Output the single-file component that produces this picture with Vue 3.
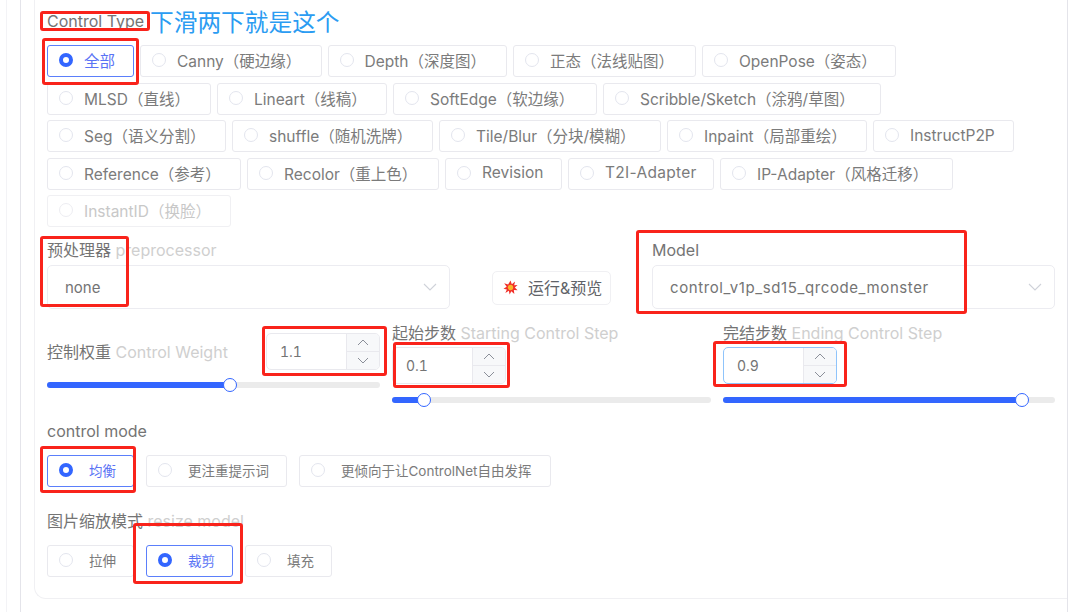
<script setup>
const typeChips = [
  { t: '全部', w: 87, on: true },
  { t: 'Canny（硬边缘）', w: 181.5 },
  { t: 'Depth（深度图）', w: 179.5 },
  { t: '正态（法线贴图）', w: 183 },
  { t: 'OpenPose（姿态）', w: 194 },
  { t: 'MLSD（直线）', w: 164 },
  { t: 'Lineart（线稿）', w: 170 },
  { t: 'SoftEdge（软边缘）', w: 204 },
  { t: 'Scribble/Sketch（涂鸦/草图）', w: 278 },
  { t: 'Seg（语义分割）', w: 179 },
  { t: 'shuffle（随机洗牌）', w: 201 },
  { t: 'Tile/Blur（分块/模糊）', w: 222 },
  { t: 'Inpaint（局部重绘）', w: 200 },
  { t: 'InstructP2P', w: 141 },
  { t: 'Reference（参考）', w: 194 },
  { t: 'Recolor（重上色）', w: 192 },
  { t: 'Revision', w: 117 },
  { t: 'T2I-Adapter', w: 146, wide: true },
  { t: 'IP-Adapter（风格迁移）', w: 233 },
  { t: 'InstantID（换脸）', w: 184, off: true }
]
const modeChips = [
  { t: '均衡', w: 87, on: true },
  { t: '更注重提示词', w: 141 },
  { t: '更倾向于让ControlNet自由发挥', w: 252 }
]
const resizeChips = [
  { t: '拉伸', w: 87 },
  { t: '裁剪', w: 87, on: true },
  { t: '填充', w: 87 }
]
const steps = [
  { zh: '起始步数', en: 'Starting Control Step', v: '0.1', pct: 10, focus: false },
  { zh: '完结步数', en: 'Ending Control Step', v: '0.9', pct: 90, focus: true }
]
const marks = ['ctype', 'all', 'pre', 'model', 'weight', 'start', 'end', 'mode', 'crop']
</script>

<template>
  <div class="page">
    <div class="outer">
      <div class="card">
        <div class="head">
          <span class="label">Control Type</span>
          <span class="note">下滑两下就是这个</span>
        </div>
        <div class="chips type">
          <div v-for="c in typeChips" :key="c.t" class="chip" :class="{ on: c.on, off: c.off, wide: c.wide }" :style="{ width: c.w + 'px' }">
            <i class="dot"></i><span>{{ c.t }}</span>
          </div>
        </div>

        <div class="pick">
          <div class="pick-col">
            <div class="label">预处理器 <em>preprocessor</em></div>
            <div class="select">
              <span>none</span>
              <svg width="14" height="8" viewBox="0 0 14 8"><path d="M1 1l6 6 6-6" fill="none" stroke="#cfd2d9" stroke-width="1.1"/></svg>
            </div>
          </div>
          <div class="run">
            <svg width="15" height="15" viewBox="0 0 18 18">
              <polygon points="9,0.5 10.6,5 14.5,1.8 13.4,6.4 17.5,6 14.2,9 17.5,12.4 13,11.9 13.6,16.8 10,13.4 8,17.5 7,13 2.8,15.6 4.6,11.4 0.6,10.6 4.4,8.2 1.4,4 6.2,5.4" fill="#f0302a"/>
              <circle cx="9" cy="9" r="3.2" fill="#f9b52c"/>
            </svg>
            <span>运行&amp;预览</span>
          </div>
          <div class="pick-col">
            <div class="label">Model</div>
            <div class="select">
              <span class="model-name">control_v1p_sd15_qrcode_monster</span>
              <svg width="14" height="8" viewBox="0 0 14 8"><path d="M1 1l6 6 6-6" fill="none" stroke="#cfd2d9" stroke-width="1.1"/></svg>
            </div>
          </div>
        </div>

        <div class="sliders">
          <div class="s-col first">
            <div class="inline">
              <div class="label">控制权重 <em>Control Weight</em></div>
              <div class="num">
                <span class="val">1.1</span>
                <div class="step">
                  <div><svg width="12" height="7" viewBox="0 0 12 7"><path d="M1 6l5-5 5 5" fill="none" stroke="#8b8f99" stroke-width="1"/></svg></div>
                  <div><svg width="12" height="7" viewBox="0 0 12 7"><path d="M1 1l5 5 5-5" fill="none" stroke="#8b8f99" stroke-width="1"/></svg></div>
                </div>
              </div>
            </div>
            <div class="track t1"><div class="fill" :style="{ width: '55%' }"><b></b></div></div>
          </div>
          <div v-for="s in steps" :key="s.zh" class="s-col">
            <div class="label">{{ s.zh }} <em>{{ s.en }}</em></div>
            <div class="num below" :class="{ focus: s.focus }">
              <span class="val">{{ s.v }}</span>
              <div class="step">
                <div><svg width="12" height="7" viewBox="0 0 12 7"><path d="M1 6l5-5 5 5" fill="none" stroke="#8b8f99" stroke-width="1"/></svg></div>
                <div><svg width="12" height="7" viewBox="0 0 12 7"><path d="M1 1l5 5 5-5" fill="none" stroke="#8b8f99" stroke-width="1"/></svg></div>
              </div>
            </div>
            <div class="track"><div class="fill" :style="{ width: s.pct + '%' }"><b></b></div></div>
          </div>
        </div>

        <div class="label sec-a">control mode</div>
        <div class="chips small">
          <div v-for="c in modeChips" :key="c.t" class="chip" :class="{ on: c.on }" :style="{ width: c.w + 'px' }">
            <i class="dot"></i><span>{{ c.t }}</span>
          </div>
        </div>

        <div class="label sec-b">图片缩放模式 <em>resize model</em></div>
        <div class="chips small">
          <div v-for="c in resizeChips" :key="c.t" class="chip" :class="{ on: c.on }" :style="{ width: c.w + 'px' }">
            <i class="dot"></i><span>{{ c.t }}</span>
          </div>
        </div>
      </div>
    </div>
    <div v-for="m in marks" :key="m" class="mark" :class="m"></div>
  </div>
</template>

<style>
html, body { margin: 0; background: #fff; }
</style>

<style scoped>
.page {
  position: relative;
  width: 1080px;
  height: 612px;
  overflow: hidden;
  background: #fff;
  box-sizing: border-box;
  padding-left: 20px;
  font-family: Inter, "Noto Sans CJK SC", sans-serif;
  color: #747474;
}
.page::before {
  content: "";
  position: absolute;
  left: 6px;
  top: 0;
  bottom: 0;
  border-left: 1px solid #f3f3f6;
}
.outer {
  width: 1048px;
  height: 625px;
  box-sizing: border-box;
  border: 1px solid #e4e4ea;
  border-top: 0;
  border-radius: 0 0 12px 12px;
  padding-left: 13px;
}
.card {
  height: 599px;
  box-sizing: border-box;
  border: 1px solid #f0f0f3;
  border-width: 0 0 1px 1px;
  border-radius: 0 0 0 12px;
  padding: 8px 11px 0 12px;
}
.head { display: flex; align-items: flex-start; height: 30px; margin-bottom: 7px; }
.head .label { width: 103px; line-height: 26px; }
.note { font-size: 23.7px; line-height: 30px; color: #2b9cf2; }
.label { font-size: 16px; line-height: 18px; color: #747474; white-space: nowrap; }
.label em { font-style: normal; color: #cfcfcf; }
.chips { display: flex; flex-wrap: wrap; gap: 5.5px 6px; }
.chips.small { gap: 12px; margin-top: 15px; }
.chip {
  display: flex;
  align-items: center;
  height: 32px;
  box-sizing: border-box;
  border: 1px solid #e9e9ee;
  border-radius: 3px;
  padding: 0 0 2px 11px;
  font-size: 15.5px;
  white-space: nowrap;
  color: #7b7b7b;
  background: #fff;
}
.chip.wide { letter-spacing: 0.3px; }
.chips.small .chip { font-size: 13.5px; }
.chips.small .dot { margin-right: 16px; }
.dot {
  width: 14px;
  height: 14px;
  box-sizing: border-box;
  border: 1px solid #e3e5ee;
  border-radius: 50%;
  margin-right: 11px;
  flex: none;
}
.chip.on { border-color: #5b7ffb; color: #5a73f5; }
.chip.on .dot { border: 4px solid #3366ff; background: #fff; }
.chip.off { color: #c8c8c8; border-color: #f0f0f3; }
.chip.off .dot { border-color: #ededf2; }
.pick { display: flex; margin-top: 14px; align-items: flex-start; }
.pick-col { width: 403px; }
.select {
  display: flex;
  align-items: center;
  justify-content: space-between;
  height: 44px;
  margin-top: 6px;
  box-sizing: border-box;
  border: 1px solid #ececf1;
  border-radius: 5px;
  padding: 0 12px 0 17px;
  font-size: 15px;
  color: #747474;
}
.model-name { letter-spacing: 0.6px; }
.run {
  display: flex;
  align-items: center;
  gap: 10px;
  width: 119px;
  height: 34px;
  margin: 30px 41px 0 42px;
  box-sizing: border-box;
  border: 1px solid #f0f0f3;
  border-radius: 5px;
  padding: 0 0 2px 10px;
  font-size: 16px;
  white-space: nowrap;
  color: #5f6368;
}
.sliders {
  display: grid;
  grid-template-columns: 333px 319px 332px;
  column-gap: 12px;
  margin-top: 15px;
}
.inline { display: flex; justify-content: space-between; align-items: center; padding-top: 9px; }
.num {
  display: flex;
  width: 114px;
  height: 37px;
  box-sizing: border-box;
  border: 1px solid #e9e9ee;
  border-radius: 5px;
  overflow: hidden;
  font-size: 14px;
  font-variant-numeric: tabular-nums;
  color: #747474;
}
.num.below { margin-top: 5px; }
.num.focus { border: 1.5px solid #8fc4fb; }
.val { flex: 1; display: flex; align-items: center; padding-left: 13px; }
.step { width: 32px; flex: none; background: #f7f8fa; border-left: 1px solid #e9e9ee; display: flex; flex-direction: column; }
.step div { flex: 1; display: flex; align-items: center; justify-content: center; }
.step div + div { border-top: 1px solid #e9e9ee; }
.track { height: 6px; border-radius: 3px; background: #ebebeb; margin-top: 13px; }
.track.t1 { margin-top: 12px; }
.fill { position: relative; height: 100%; border-radius: 3px; background: #3366ff; }
.fill b {
  position: absolute;
  right: -7px;
  top: -4px;
  width: 14px;
  height: 14px;
  box-sizing: border-box;
  border: 1.5px solid #3366ff;
  border-radius: 50%;
  background: #fff;
}
.sec-a { margin-top: 19px; }
.sec-b { margin-top: 25px; }
.mark {
  position: absolute;
  box-sizing: border-box;
  border: 3px solid #f9231b;
  border-radius: 3px;
}
.ctype { left: 40px; top: 11px; width: 110px; height: 20px; }
.all { left: 42px; top: 38px; width: 97px; height: 47px; }
.pre { left: 40px; top: 236px; width: 89px; height: 71px; }
.model { left: 636px; top: 230px; width: 331px; height: 84px; }
.weight { left: 262px; top: 326px; width: 125px; height: 50px; }
.start { left: 393px; top: 342px; width: 117px; height: 46px; }
.end { left: 713px; top: 341px; width: 134px; height: 46px; }
.mode { left: 40px; top: 446px; width: 96px; height: 47px; }
.crop { left: 133px; top: 523px; width: 110px; height: 61px; }
</style>
